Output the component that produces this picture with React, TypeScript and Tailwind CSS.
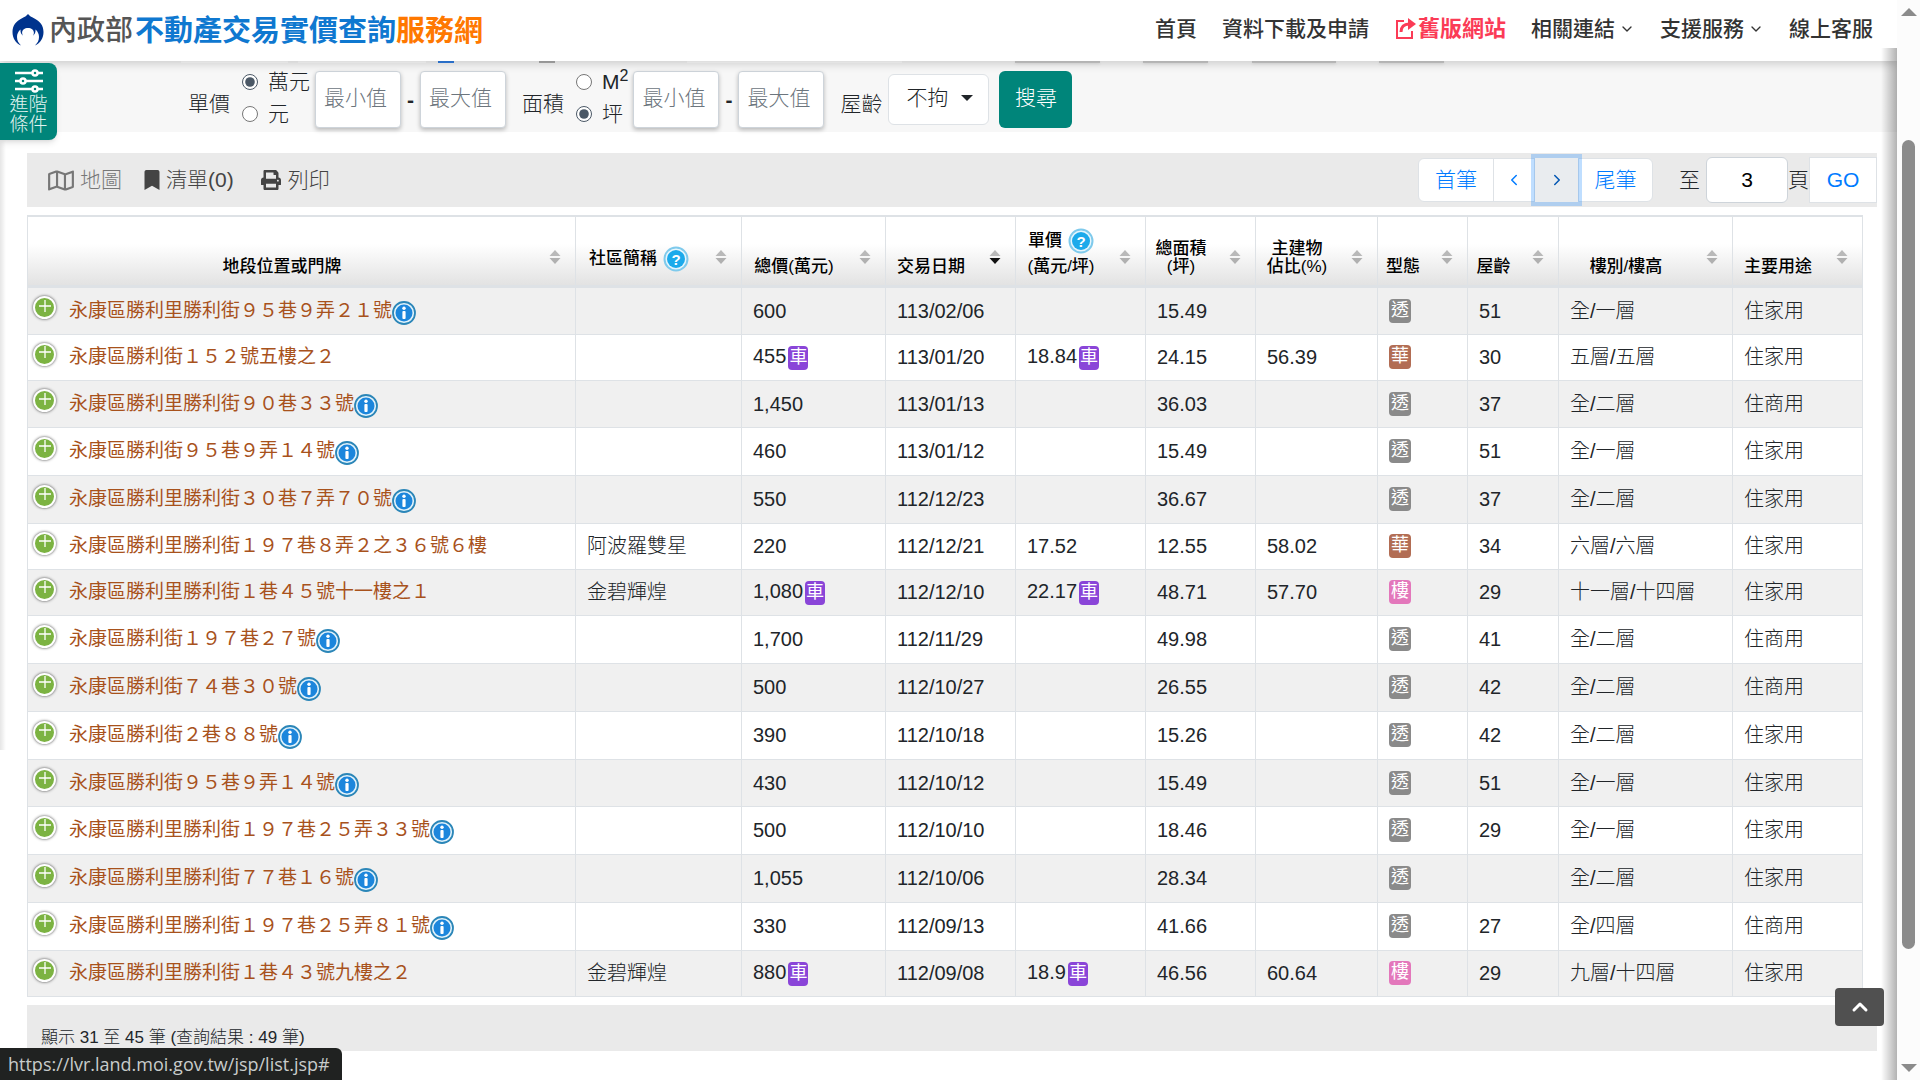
import React, { useState } from 'react';
import { ChevronDown, ChevronUp, ChevronLeft, ChevronRight } from 'lucide-react';
import { FaBookmark, FaPrint, FaRegMap } from 'react-icons/fa';

type Deal = {
  address: string;
  info?: boolean;
  community?: string;
  price: string;
  date: string;
  unit?: string;
  parking?: boolean;
  area: string;
  ratio?: string;
  kind: '透' | '華' | '樓';
  age?: string;
  floor: string;
  usage: string;
};

const deals: Deal[] = [
  { address: '永康區勝利里勝利街９５巷９弄２１號', info: true, price: '600', date: '113/02/06', area: '15.49', kind: '透', age: '51', floor: '全/一層', usage: '住家用' },
  { address: '永康區勝利街１５２號五樓之２', price: '455', date: '113/01/20', unit: '18.84', parking: true, area: '24.15', ratio: '56.39', kind: '華', age: '30', floor: '五層/五層', usage: '住家用' },
  { address: '永康區勝利里勝利街９０巷３３號', info: true, price: '1,450', date: '113/01/13', area: '36.03', kind: '透', age: '37', floor: '全/二層', usage: '住商用' },
  { address: '永康區勝利街９５巷９弄１４號', info: true, price: '460', date: '113/01/12', area: '15.49', kind: '透', age: '51', floor: '全/一層', usage: '住家用' },
  { address: '永康區勝利里勝利街３０巷７弄７０號', info: true, price: '550', date: '112/12/23', area: '36.67', kind: '透', age: '37', floor: '全/二層', usage: '住家用' },
  { address: '永康區勝利里勝利街１９７巷８弄２之３６號６樓', community: '阿波羅雙星', price: '220', date: '112/12/21', unit: '17.52', area: '12.55', ratio: '58.02', kind: '華', age: '34', floor: '六層/六層', usage: '住家用' },
  { address: '永康區勝利里勝利街１巷４５號十一樓之１', community: '金碧輝煌', price: '1,080', date: '112/12/10', unit: '22.17', parking: true, area: '48.71', ratio: '57.70', kind: '樓', age: '29', floor: '十一層/十四層', usage: '住家用' },
  { address: '永康區勝利街１９７巷２７號', info: true, price: '1,700', date: '112/11/29', area: '49.98', kind: '透', age: '41', floor: '全/二層', usage: '住商用' },
  { address: '永康區勝利街７４巷３０號', info: true, price: '500', date: '112/10/27', area: '26.55', kind: '透', age: '42', floor: '全/二層', usage: '住商用' },
  { address: '永康區勝利街２巷８８號', info: true, price: '390', date: '112/10/18', area: '15.26', kind: '透', age: '42', floor: '全/二層', usage: '住家用' },
  { address: '永康區勝利街９５巷９弄１４號', info: true, price: '430', date: '112/10/12', area: '15.49', kind: '透', age: '51', floor: '全/一層', usage: '住家用' },
  { address: '永康區勝利里勝利街１９７巷２５弄３３號', info: true, price: '500', date: '112/10/10', area: '18.46', kind: '透', age: '29', floor: '全/一層', usage: '住家用' },
  { address: '永康區勝利里勝利街７７巷１６號', info: true, price: '1,055', date: '112/10/06', area: '28.34', kind: '透', floor: '全/二層', usage: '住家用' },
  { address: '永康區勝利里勝利街１９７巷２５弄８１號', info: true, price: '330', date: '112/09/13', area: '41.66', kind: '透', age: '27', floor: '全/四層', usage: '住商用' },
  { address: '永康區勝利里勝利街１巷４３號九樓之２', community: '金碧輝煌', price: '880', date: '112/09/08', unit: '18.9', parking: true, area: '46.56', ratio: '60.64', kind: '樓', age: '29', floor: '九層/十四層', usage: '住家用' },
];

const kindColor = {
  透: 'bg-[#8a8a8a]',
  華: 'bg-[#b26d54]',
  樓: 'bg-[#e377bb]',
};

const columns = [
  { key: 'address', lines: ['地段位置或門牌'], width: '' },
  { key: 'community', lines: ['社區簡稱'], help: true, width: 'w-[166px]' },
  { key: 'price', lines: ['總價(萬元)'], width: 'w-[144px]' },
  { key: 'date', lines: ['交易日期'], sorted: true, width: 'w-[130px]' },
  { key: 'unit', lines: ['單價', '(萬元/坪)'], help: true, width: 'w-[130px]' },
  { key: 'area', lines: ['總面積', '(坪)'], width: 'w-[110px]' },
  { key: 'ratio', lines: ['主建物', '佔比(%)'], width: 'w-[122px]' },
  { key: 'kind', lines: ['型態'], width: 'w-[90px]' },
  { key: 'age', lines: ['屋齡'], width: 'w-[91px]' },
  { key: 'floor', lines: ['樓別/樓高'], width: 'w-[174px]' },
  { key: 'usage', lines: ['主要用途'], width: 'w-[130px]' },
];

function MoiLogo() {
  return (
    <svg className="w-8 h-9 shrink-0" viewBox="0 0 32 36">
      <path
        fill="#00338d"
        d="M16 1c1.500 2 3.500 3 6 4.200C28 8 31.500 12.500 31.500 19c0 6-3 11-8.500 13.500 2.500-2.500 4-5 4-8.500 0-3-1.200-5.500-3.500-7.500.3 2.800-.8 5-2.500 6.200.6-1 .9-2 .9-3 0-2.800-2.600-4.700-5.900-4.700s-5.900 1.900-5.900 4.700c0 1 .3 2 .9 3-1.700-1.200-2.800-3.400-2.500-6.200C6.200 18.500 5 21 5 24c0 3.500 1.500 6 4 8.500C3.500 30 .5 25 .5 19 .5 12.500 4 8 10 5.200 12.500 4 14.500 3 16 1z"
      />
    </svg>
  );
}

function InfoIcon() {
  return (
    <svg className="w-6 h-6 shrink-0 mt-1" viewBox="0 0 24 24">
      <circle cx="12" cy="12" r="11" fill="#e3f3fb" stroke="#2b86b8" strokeWidth="1.800" />
      <circle cx="12" cy="12" r="8.500" fill="#1c86dc" />
      <circle cx="12" cy="7.300" r="1.700" fill="#fff" />
      <rect x="10.400" y="10" width="3.200" height="8" rx="1" fill="#fff" />
    </svg>
  );
}

function HelpIcon() {
  return (
    <svg className="inline-block w-[26px] h-[26px] ml-1.5" viewBox="0 0 26 26">
      <circle cx="13" cy="13" r="11.500" fill="#e6f6fd" stroke="#7fcaec" strokeWidth="2" />
      <circle cx="13" cy="13" r="9" fill="#1caaeb" />
      <text x="13" y="18.500" textAnchor="middle" fontSize="15" fontWeight="700" fill="#fff">?</text>
    </svg>
  );
}

function SortIcon({ active }: { active?: boolean }) {
  return (
    <svg className="w-3 h-4" viewBox="0 0 12 16">
      <path d="M6 1l5.500 6H.5z" fill="#b9b9b9" />
      <path d="M6 15L.5 9h11z" fill={active ? '#111' : '#b0b0b0'} />
    </svg>
  );
}

function ParkingBadge() {
  return (
    <span className="inline-block w-5 h-6 ml-0.5 rounded bg-[#8a45d8] text-white text-[18px] leading-[22px] font-normal text-center align-middle">
      車
    </span>
  );
}

function UnitRadios({ name, labels, defaultIndex }: { name: string; labels: React.ReactNode[]; defaultIndex: number }) {
  return (
    <div className="flex flex-col ml-3">
      {labels.map((label, i) => (
        <label key={i} className="flex items-center h-8">
          <input type="radio" name={name} defaultChecked={i === defaultIndex} className="w-4 h-4 mr-2.5 accent-[#4b5866]" />
          <span className="whitespace-nowrap leading-8">{label}</span>
        </label>
      ))}
    </div>
  );
}

function RangeInputs({ name }: { name: string }) {
  const box =
    'w-[86px] h-[57px] px-2 pb-1 bg-white border border-[#ced4da] rounded shadow-[0_2px_4px_rgba(0,0,0,0.25)] placeholder:text-[#6c757d] focus:outline-none';
  return (
    <div className="flex items-center">
      <input className={box} placeholder="最小值" aria-label={`${name}最小值`} />
      <span className="w-[19px] text-center font-bold">-</span>
      <input className={box} placeholder="最大值" aria-label={`${name}最大值`} />
    </div>
  );
}

function Header() {
  return (
    <header className="relative z-10 flex items-center justify-between h-[61px] pl-3 pr-6 bg-white shadow-[0_2px_10px_rgba(0,0,0,0.2)]">
      <a href="#" className="flex items-center whitespace-nowrap">
        <MoiLogo />
        <span className="ml-[5px] text-[28px] leading-9 font-medium text-[#555]">內政部</span>
        <span className="ml-0.5 text-[29px] leading-9 font-bold text-[#0f78d0]">
          不動產交易實價查詢<span className="text-[#ff7800]">服務網</span>
        </span>
      </a>
      <nav className="flex items-center gap-[25px] pb-1 text-[21px] font-medium text-[#333] whitespace-nowrap">
        <a href="#">首頁</a>
        <a href="#">資料下載及申請</a>
        <a href="#" className="flex items-center text-[22px] font-bold text-[#fb3b56]">
          <svg className="w-6 h-6" viewBox="0 0 22 24" fill="none" stroke="currentColor" strokeWidth="2">
            <path d="M9 4H2v17h15v-7" />
            <path d="M6 15c0-5 3-8 8-8" strokeWidth="3" />
            <path d="M13 1l8 6-8 6z" fill="currentColor" stroke="none" />
          </svg>
          舊版網站
        </a>
        <a href="#" className="flex items-center">相關連結<ChevronDown className="w-4 h-4 ml-1" /></a>
        <a href="#" className="flex items-center">支援服務<ChevronDown className="w-4 h-4 ml-1" /></a>
        <a href="#">線上客服</a>
      </nav>
    </header>
  );
}

// lower edge of the first filter row, the rest of it is scrolled under the header
function ScrolledFilterRow() {
  return (
    <div className="flex h-0.5 pl-[181px]">
      <div className="w-[107px] bg-white shadow-md" />
      <div className="w-32 ml-2.5 bg-white shadow-md" />
      <div className="w-4 ml-3 bg-[#2f7de1]" />
      <div className="w-4 ml-[85px] bg-[#aaa]" />
      <div className="w-[215px] ml-[132px] bg-white shadow-md" />
      <div className="w-[85px] ml-[113px] bg-[#ccc] shadow" />
      <div className="w-[65px] ml-[43px] bg-[#ccc] shadow" />
      <div className="w-[84px] ml-11 bg-[#ccc] shadow" />
      <div className="w-[65px] ml-[43px] bg-[#ccc] shadow" />
    </div>
  );
}

function FilterBar() {
  return (
    <section className="h-[71px] bg-[#f7f7f7]">
      <ScrolledFilterRow />
      <form className="flex items-center pl-[188px] pt-1 h-[69px] text-[21px] font-light text-[#212529] whitespace-nowrap">
        <span className="pt-2">單價</span>
        <div className="pb-1"><UnitRadios name="unit-price" labels={['萬元', '元']} defaultIndex={0} /></div>
        <div className="ml-[5px]"><RangeInputs name="單價" /></div>
        <span className="ml-4 pt-2">面積</span>
        <div className="pb-1"><UnitRadios name="unit-area" labels={[<>M<sup className="text-[16px]">2</sup></>, '坪']} defaultIndex={1} /></div>
        <div className="ml-[5px]"><RangeInputs name="面積" /></div>
        <label htmlFor="age" className="ml-4 pt-2">屋齡</label>
        <div className="relative ml-1.5">
          <select id="age" className="appearance-none w-[101px] h-[51px] pl-[17px] pb-1 bg-white border border-[#dee2e6] rounded-md">
            <option>不拘</option>
          </select>
          <svg className="absolute right-4 top-5 w-3 h-2 pointer-events-none" viewBox="0 0 12 8">
            <path d="M0 1h12L6 7z" fill="#212529" />
          </svg>
        </div>
        <button type="button" className="w-[73px] h-[57px] ml-2.5 pb-1 rounded-md bg-[#00857a] text-white">搜尋</button>
      </form>
    </section>
  );
}

function Toolbar() {
  const [page, setPage] = useState('3');
  const pageBtn = 'flex items-center justify-center h-11 bg-white border border-[#dee2e6] text-[#007bff]';

  return (
    <div className="flex items-center justify-between h-[54px] pl-[21px] bg-[#eaeaea] text-[21px] font-light text-[#444] whitespace-nowrap">
      <div className="flex items-center">
        <button className="flex items-center text-[#777]">
          <FaRegMap className="w-[26px] h-[23px] mr-1.5" />地圖
        </button>
        <button className="flex items-center ml-[22px]">
          <FaBookmark className="w-4 h-5 mr-1.5" />清單(0)
        </button>
        <button className="flex items-center ml-[27px]">
          <FaPrint className="w-5 h-5 mr-[7px]" />列印
        </button>
      </div>
      <div className="flex items-center">
        <button className={`${pageBtn} w-[76px] rounded-l-md`}>首筆</button>
        <button className={`${pageBtn} w-[42px] -ml-px`} aria-label="上一頁"><ChevronLeft className="w-[18px] h-[18px]" /></button>
        <button className="relative flex items-center justify-center w-[43px] h-11 bg-[#e9ecef] text-[#0056b3] ring-4 ring-[#007bff]/25" aria-label="下一頁">
          <ChevronRight className="w-[18px] h-[18px]" />
        </button>
        <button className={`${pageBtn} w-[75px] rounded-r-md`}>尾筆</button>
        <label htmlFor="page" className="ml-[26px] mr-1.5 text-[#212529]">至</label>
        <input
          id="page"
          value={page}
          onChange={(e) => setPage(e.target.value)}
          className="w-[82px] h-[46px] bg-white border border-[#ced4da] rounded-md text-center text-black"
        />
        <span className="text-[#212529]">頁</span>
        <button className="w-[68px] h-[46px] bg-white border border-[#dee2e6] text-[#007bff]">GO</button>
      </div>
    </div>
  );
}

function DealTable() {
  const cell = 'border border-[#dee2e6] px-[11px] py-0';

  const rowHeight = (deal: Deal, i: number) => {
    if (!deal.info) return 'h-[46px]';
    return i % 4 === 2 ? 'h-[47px]' : 'h-12';
  };

  return (
    <table className="w-full table-fixed border-collapse text-[20px] leading-6 font-light text-[#212529] whitespace-nowrap">
      <thead>
        <tr className="h-[70px] bg-gradient-to-b from-white from-40% to-[#e2e2e2]">
          {columns.map((col) => (
            <th
              key={col.key}
              className={`relative ${col.width} border border-t-2 border-b-3 border-[#dee2e6] pl-1 pr-[43px] pb-[9px] align-bottom text-center text-[17px] leading-[18px] font-medium text-black`}
            >
              {col.lines.map((line, i) => (
                <div key={line} className={`flex items-center justify-center ${col.help && i === 0 ? 'mb-1' : ''}`}>
                  {line}
                  {col.help && i === 0 && <HelpIcon />}
                </div>
              ))}
              <span className="absolute right-3.5 top-8"><SortIcon active={col.sorted} /></span>
            </th>
          ))}
        </tr>
      </thead>
      <tbody>
        {deals.map((deal, i) => (
          <tr key={i} className={`${i % 2 === 0 ? 'bg-[#f0f0f0]' : 'bg-white'} ${rowHeight(deal, i)}`}>
            <td className="border border-[#dee2e6] pl-[5px] py-0">
              <div className="flex items-center">
                <button
                  className="flex items-center justify-center w-[23px] h-[23px] mb-1.5 rounded-full border-2 border-white bg-[#7cb342] shadow-[0_0_3px_#444]"
                  aria-label="展開"
                >
                  <svg className="w-3 h-3 mb-1" viewBox="0 0 12 12" stroke="#fff" strokeWidth="1.300">
                    <path d="M6 0v12M0 6h12" />
                  </svg>
                </button>
                <a href="#" className="ml-[13px] text-[19px] font-normal text-[#a8521c]">{deal.address}</a>
                {deal.info && <InfoIcon />}
              </div>
            </td>
            <td className={cell}>{deal.community}</td>
            <td className={cell}>{deal.price}{deal.parking && <ParkingBadge />}</td>
            <td className={cell}>{deal.date}</td>
            <td className={cell}>{deal.unit}{deal.parking && <ParkingBadge />}</td>
            <td className={cell}>{deal.area}</td>
            <td className={cell}>{deal.ratio}</td>
            <td className={cell}>
              <span className={`block w-[22px] h-6 rounded text-center text-white text-[18px] leading-[22px] font-normal ${kindColor[deal.kind]}`}>
                {deal.kind}
              </span>
            </td>
            <td className={cell}>{deal.age}</td>
            <td className={cell}>{deal.floor}</td>
            <td className={cell}>{deal.usage}</td>
          </tr>
        ))}
      </tbody>
    </table>
  );
}

function Scrollbar() {
  return (
    <div className="flex flex-col items-center w-[23px] shrink-0 pt-2 pb-2 bg-[#fcfcfc]">
      <svg className="w-4 h-2" viewBox="0 0 16 8"><path d="M8 0l8 8H0z" fill="#8b8b8b" /></svg>
      <div className="w-[13px] h-[76%] mt-[124px] mb-auto rounded-full bg-[#8b8b8b]" />
      <svg className="w-4 h-2" viewBox="0 0 16 8"><path d="M8 8L0 0h16z" fill="#8b8b8b" /></svg>
    </div>
  );
}

export default function App() {
  return (
    <div className="flex h-screen overflow-hidden bg-white font-['Liberation_Sans','Noto_Sans_CJK_TC',sans-serif]">
      <div className="relative flex-1 min-w-0 overflow-hidden">
        <Header />
        <FilterBar />
        <main className="pt-[21px] pl-[27px] pr-5">
          <Toolbar />
          <div className="pt-2 pr-3.5">
            <DealTable />
          </div>
          <div className="flex items-end h-[46px] mt-2 pl-3.5 bg-[#eaeaea] text-[17px] font-light text-[#212529]">
            顯示 31 至 45 筆 (查詢結果 : 49 筆)
          </div>
        </main>

        <button className="absolute z-10 left-0 top-[63px] flex flex-col items-center w-[57px] h-[77px] pt-1.5 rounded-r-lg bg-[#00857a] text-[#e0f3f0] text-[19px] leading-5 font-light shadow-md">
          <svg className="w-7 h-6 shrink-0 mb-0.5" viewBox="0 0 28 24" fill="#00857a" stroke="#fff" strokeWidth="2.500">
            <path d="M0 4h28M0 12h28M0 20h28" />
            <circle cx="20" cy="4" r="2.500" />
            <circle cx="8" cy="12" r="2.500" />
            <circle cx="20" cy="20" r="2.500" />
          </svg>
          <span>進階</span>
          <span>條件</span>
        </button>

        <div className="absolute left-0 top-[140px] w-1.5 h-[610px] bg-gradient-to-r from-black/10 to-transparent" />
        <div className="absolute right-0 top-12 bottom-0 z-10 w-4 bg-gradient-to-l from-black/30 to-transparent" />

        <button className="absolute z-20 right-[13px] bottom-[54px] flex items-center justify-center w-[49px] h-[38px] rounded bg-[#505050] text-white" aria-label="回頂端">
          <ChevronUp className="w-6 h-6" strokeWidth={3} />
        </button>

        <div className="absolute left-0 bottom-0 flex items-center h-8 pl-2 pr-3 rounded-tr-md bg-[#202221] text-[#c8cccb] text-[18px] font-['Open_Sans','Noto_Sans',sans-serif]">
          https://lvr.land.moi.gov.tw/jsp/list.jsp#
        </div>
      </div>
      <Scrollbar />
    </div>
  );
}
